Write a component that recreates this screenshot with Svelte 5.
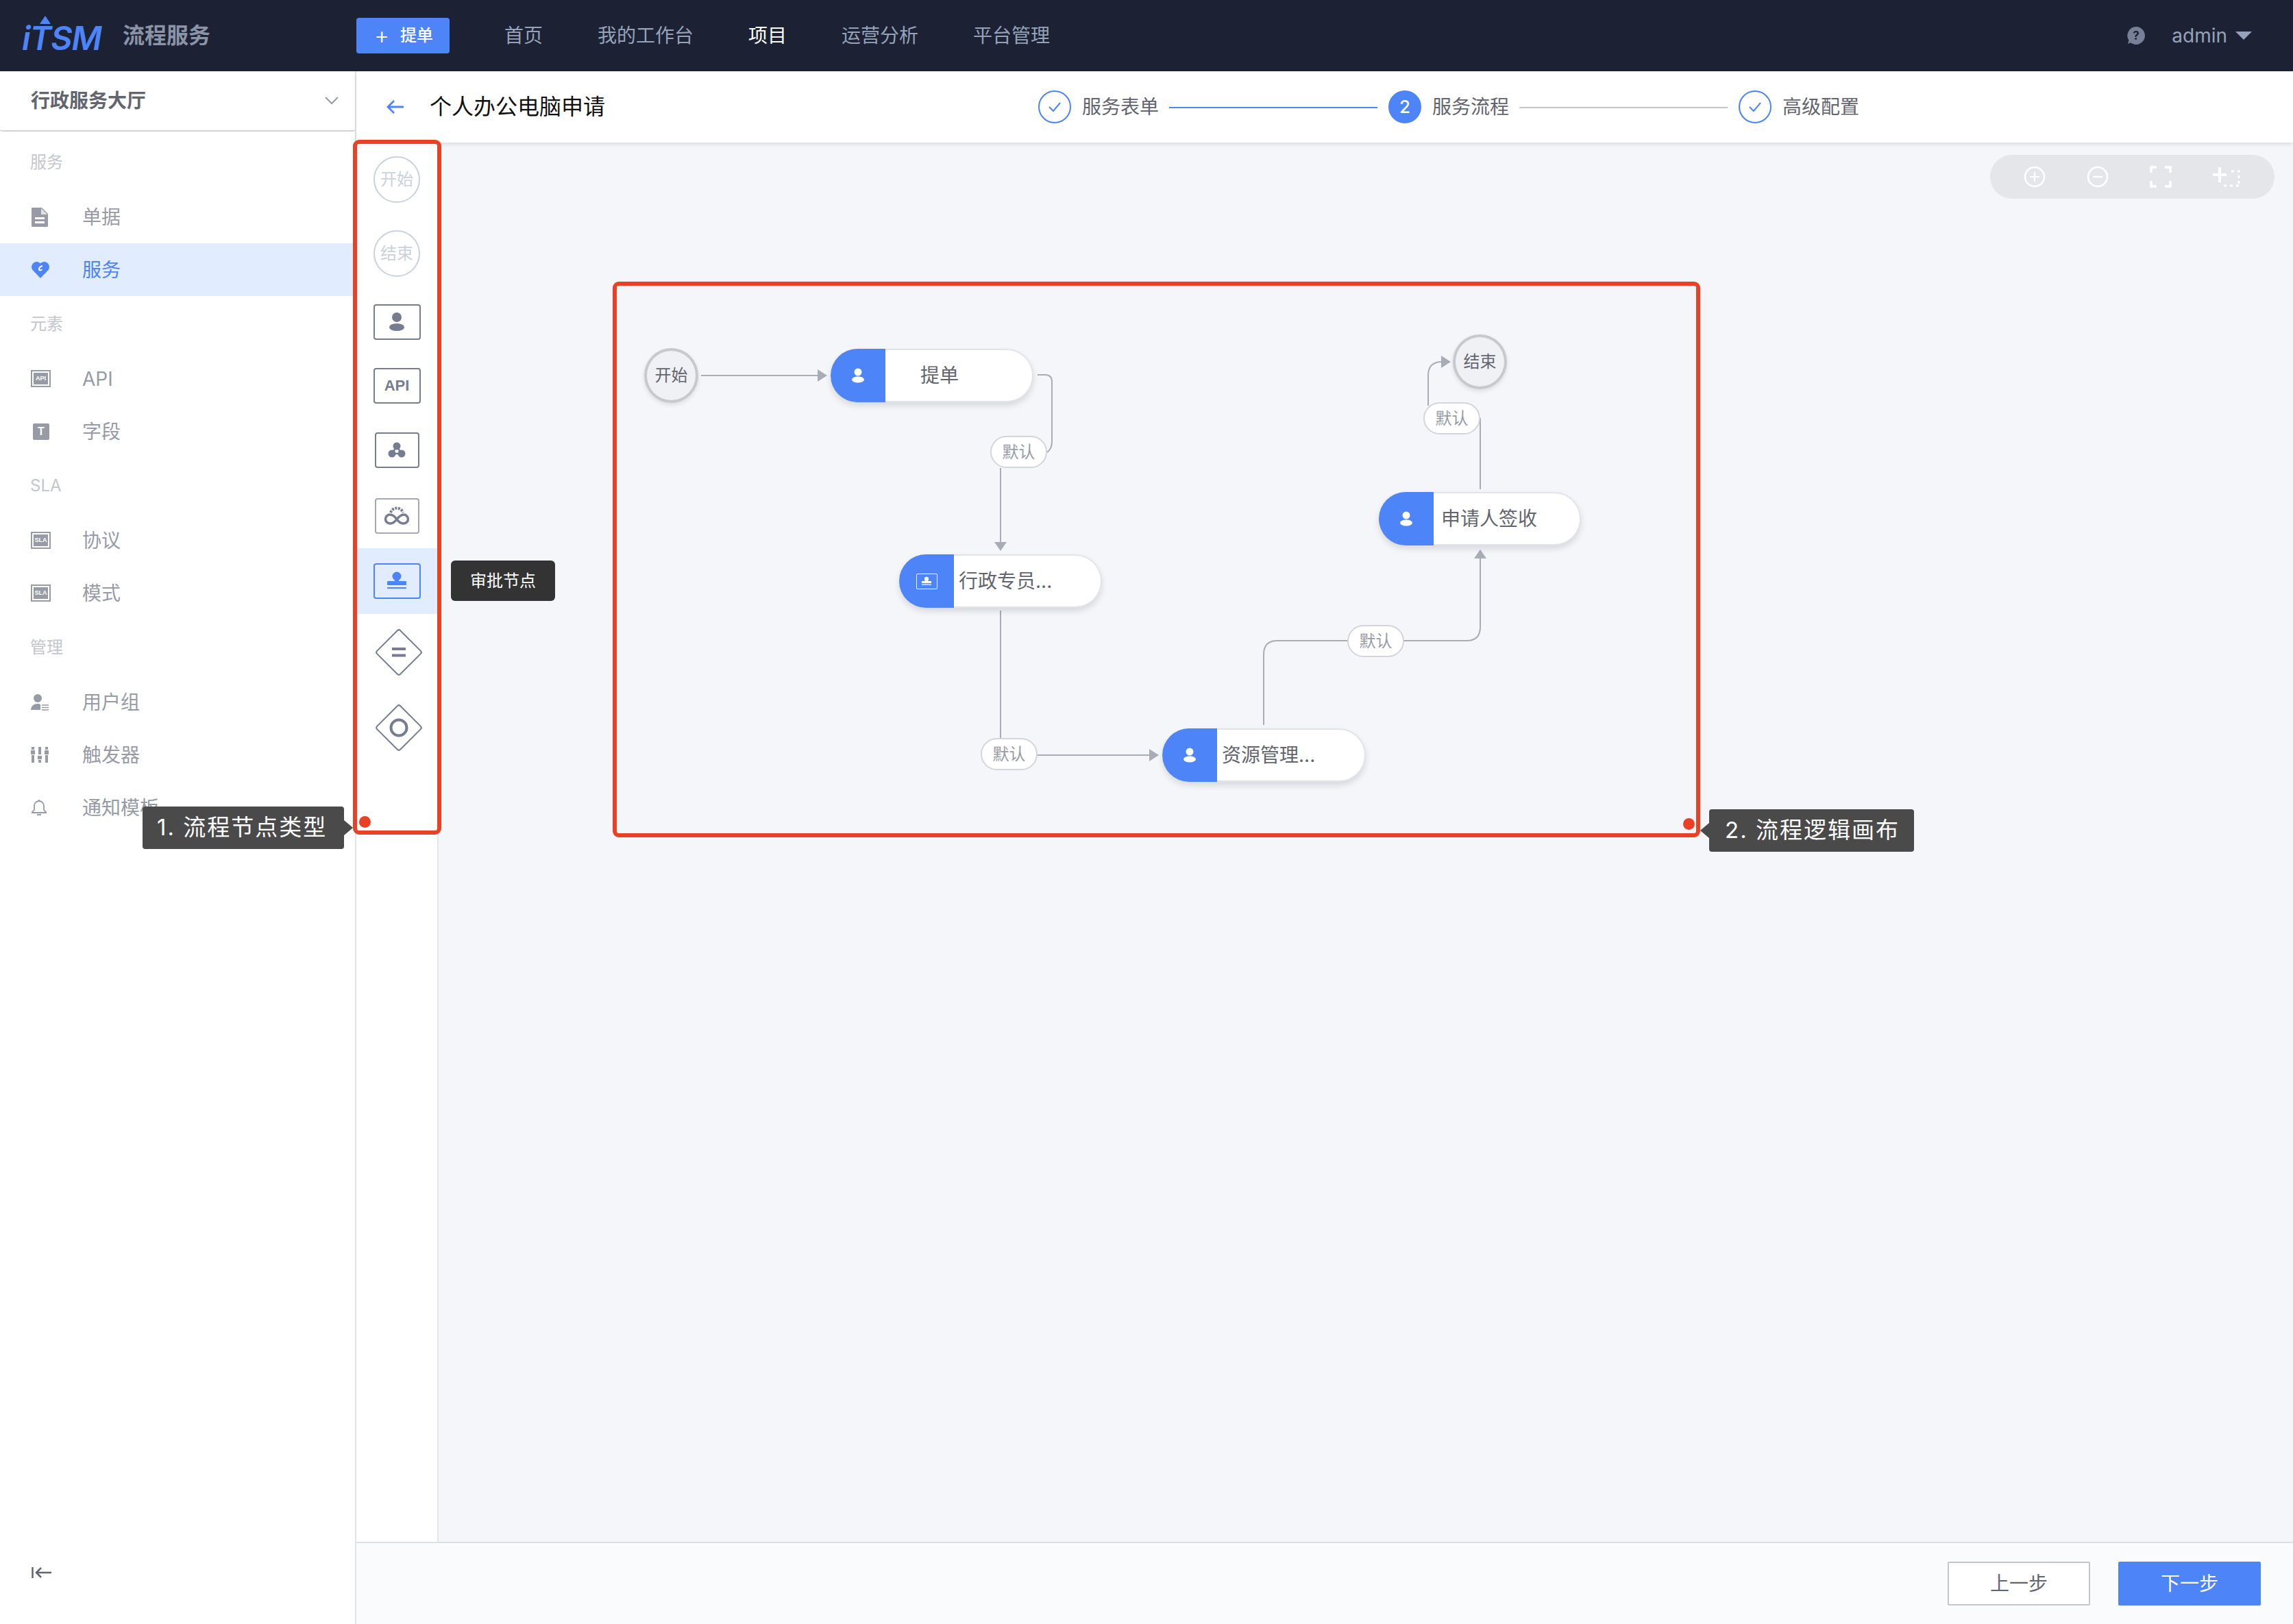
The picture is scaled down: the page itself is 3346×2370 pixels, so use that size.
<script>
  const nav = ['首页', '我的工作台', '项目', '运营分析', '平台管理'];
  const menu = [
    { label: '服务', items: [{ t: '单据', i: 'doc' }, { t: '服务', i: 'heart', active: true }] },
    { label: '元素', items: [{ t: 'API', i: 'api' }, { t: '字段', i: 'field' }] },
    { label: 'SLA', items: [{ t: '协议', i: 'sla' }, { t: '模式', i: 'sla' }] },
    { label: '管理', items: [{ t: '用户组', i: 'group' }, { t: '触发器', i: 'trigger' }, { t: '通知模板', i: 'bell' }] }
  ];
  const steps = [
    { t: '服务表单', s: 'done' },
    { t: '服务流程', s: 'cur' },
    { t: '高级配置', s: 'done' }
  ];
  const nodes = [
    { x: 1212, y: 509, w: 296, bw: 80, t: '提单', tx: 131, icon: 'user' },
    { x: 1312, y: 809, w: 296, bw: 80, t: '行政专员...', tx: 87, icon: 'stamp' },
    { x: 1696, y: 1063, w: 297, bw: 80, t: '资源管理...', tx: 87, icon: 'user' },
    { x: 2012, y: 718, w: 295, bw: 80, t: '申请人签收', tx: 91, icon: 'user' }
  ];
  const circles = [
    { x: 940, y: 508, t: '开始' },
    { x: 2120, y: 488, t: '结束' }
  ];
  const labels = [
    { x: 1445, y: 636 },
    { x: 1431, y: 1077 },
    { x: 1966, y: 912 },
    { x: 2077, y: 587 }
  ];
</script>

<div class="app">
  <header class="top">
    <div class="brand">
      <span class="logo">iTSM<svg class="logo-arrow" viewBox="0 0 16 12" width="16" height="12"><polygon points="8,0 16,12 0,12" fill="#4d84f8" /></svg></span>
      <span class="brand-name">流程服务</span>
    </div>
    <button class="create"><span class="plus">+</span>提单</button>
    <nav class="nav">
      {#each nav as n, i}
        <span class:on={i === 2}>{n}</span>
      {/each}
    </nav>
    <div class="user">
      <svg width="28" height="28" viewBox="0 0 28 28"><path d="M14 1a13 13 0 1 1-8 23.3L2 26l1.4-5A13 13 0 0 1 14 1z" fill="#768197" /><text x="14" y="20" font-size="17" font-weight="700" text-anchor="middle" fill="#1c2233" font-family="Inter">?</text></svg>
      <span class="uname">admin</span>
      <svg width="24" height="12" viewBox="0 0 24 12"><polygon points="0,0 24,0 12,12" fill="#96a2b9" /></svg>
    </div>
  </header>

  <div class="body">
    <aside class="side">
      <div class="picker">
        <span>行政服务大厅</span>
        <svg width="20" height="12" viewBox="0 0 20 12"><path d="M1 1l9 9 9-9" fill="none" stroke="#979ba5" stroke-width="2" /></svg>
      </div>
      <div class="menu">
        {#each menu as g}
          <div class="group">{g.label}</div>
          {#each g.items as it}
            <div class="item" class:active={it.active}>
              <span class="ic">
                {#if it.i === 'doc'}
                  <svg width="26" height="30" viewBox="0 0 26 30"><path d="M2 1h14l9 9v18a1 1 0 0 1-1 1H2a1 1 0 0 1-1-1V2a1 1 0 0 1 1-1z" fill="#979ba5" /><path d="M6 15h14v3H6zM6 21h14v3H6z" fill="#fff" /><path d="M15 2v9h9" fill="#fff" opacity=".7" /></svg>
                {:else if it.i === 'heart'}
                  <svg width="28" height="26" viewBox="0 0 28 26"><path d="M14 25L2.500 13A7.500 7.500 0 0 1 13 2.500L14 3.500l1-1A7.500 7.500 0 0 1 25.500 13z" fill="#4d84f8" /><path d="M17 7c-3 1-5 3-5 5 0 2 3 2 4 0" fill="none" stroke="#fff" stroke-width="2" /></svg>
                {:else if it.i === 'api' || it.i === 'sla'}
                  <span class="tag">{it.i === 'api' ? 'API' : 'SLA'}</span>
                {:else if it.i === 'field'}
                  <span class="tbox">T</span>
                {:else if it.i === 'group'}
                  <svg width="26" height="26" viewBox="0 0 26 26"><circle cx="10" cy="7" r="6" fill="#979ba5" /><path d="M0 24c0-6 5-9 10-9 2 0 3 .5 4 1v8z" fill="#979ba5" /><path d="M16 17h10M16 20.500h10M16 24h10" stroke="#979ba5" stroke-width="1.500" /></svg>
                {:else if it.i === 'trigger'}
                  <svg width="26" height="24" viewBox="0 0 26 24"><path d="M3 0v4M3 12v11M13 0v11M13 19v4M23 0v4M23 12v11" stroke="#979ba5" stroke-width="4" /><rect x="0" y="5" width="6" height="6" fill="#979ba5" /><rect x="10" y="13" width="6" height="5" fill="#979ba5" /><rect x="20" y="5" width="6" height="6" fill="#979ba5" /></svg>
                {:else}
                  <svg width="24" height="26" viewBox="0 0 24 26"><path d="M12 3a7 7 0 0 0-7 7v6l-3 3v1h20v-1l-3-3v-6a7 7 0 0 0-7-7zM12 1v2M9 23h6" fill="none" stroke="#979ba5" stroke-width="1.800" /></svg>
                {/if}
              </span>
              <span>{it.t}</span>
            </div>
          {/each}
        {/each}
      </div>
      <div class="collapse">
        <svg width="30" height="18" viewBox="0 0 30 18"><path d="M1.500 1v16M29 9H8M14 2L7 9l7 7" fill="none" stroke="#63656e" stroke-width="2.500" /></svg>
      </div>
    </aside>

    <main class="main">
      <div class="sub">
        <svg class="back" width="26" height="22" viewBox="0 0 26 22"><path d="M25 11H3M11 2l-9 9 9 9" fill="none" stroke="#4d84f8" stroke-width="2.800" /></svg>
        <span class="title">个人办公电脑申请</span>
        <div class="steps">
          {#each steps as s, i}
            <span class="dot" class:cur={s.s === 'cur'}>
              {#if s.s === 'cur'}2{:else}
                <svg width="20" height="16" viewBox="0 0 20 16"><path d="M2 8l6 6L18 2" fill="none" stroke="#4d84f8" stroke-width="2" /></svg>
              {/if}
            </span>
            <span class="stxt">{s.t}</span>
            {#if i < 2}<span class="sline" class:blue={i === 0}></span>{/if}
          {/each}
        </div>
      </div>

      <div class="work">
        <div class="palette">
          <div class="pi"><span class="pcircle">开始</span></div>
          <div class="pi"><span class="pcircle">结束</span></div>
          <div class="pi"><span class="pbox">
            <svg width="26" height="28" viewBox="0 0 26 28"><circle cx="13" cy="7" r="7" fill="#767d8e" /><ellipse cx="13" cy="21.500" rx="11" ry="5.500" fill="#767d8e" /></svg>
          </span></div>
          <div class="pi"><span class="pbox apitxt">API</span></div>
          <div class="pi"><span class="pbox narrow">
            <svg width="26" height="26" viewBox="0 0 26 26"><path d="M13 7L6 18h14z" fill="none" stroke="#767d8e" stroke-width="2.500" /><circle cx="13" cy="7" r="5.500" fill="#767d8e" /><circle cx="6" cy="18" r="5.500" fill="#767d8e" /><circle cx="20" cy="18" r="5.500" fill="#767d8e" /></svg>
          </span></div>
          <div class="pi"><span class="pbox narrow thin">
            <svg width="40" height="32" viewBox="0 0 40 32"><path d="M20 21c-4-6-7-7-10-7a6.500 6.500 0 0 0 0 13c3 0 6-1 10-6s7-7 10-7a6.500 6.500 0 0 1 0 13c-3 0-6-1-10-6z" fill="none" stroke="#767d8e" stroke-width="3.500" /><path d="M11 11a9.500 9.500 0 0 1 18 0" fill="none" stroke="#767d8e" stroke-width="4" stroke-dasharray="3 1.500" /></svg>
          </span></div>
          <div class="pi sel"><span class="pbox blue">
            <svg width="30" height="30" viewBox="0 0 30 30"><circle cx="15" cy="8" r="6.500" fill="#4d84f8" /><rect x="1" y="15" width="28" height="6" rx="1" fill="#4d84f8" /><rect x="12" y="11" width="6" height="5" fill="#4d84f8" /><rect x="1" y="24" width="28" height="2" fill="#4d84f8" /></svg>
          </span></div>
          <div class="pi">
            <svg class="dia" width="72" height="72" viewBox="0 0 72 72"><rect x="12" y="12" width="48" height="48" rx="3" transform="rotate(45 36 36)" fill="#fff" stroke="#767d8e" stroke-width="2" /><path d="M26 31h20M26 40.500h20" stroke="#767d8e" stroke-width="4" /></svg>
          </div>
          <div class="pi">
            <svg class="dia" width="72" height="72" viewBox="0 0 72 72"><rect x="12" y="12" width="48" height="48" rx="3" transform="rotate(45 36 36)" fill="#fff" stroke="#767d8e" stroke-width="2" /><circle cx="36" cy="36" r="11.500" fill="none" stroke="#767d8e" stroke-width="4" /></svg>
          </div>
        </div>

        <div class="canvas">
          <div class="tools">
            <svg width="32" height="32" viewBox="0 0 32 32"><circle cx="16" cy="16" r="14" fill="none" stroke="#fff" stroke-width="2.500" /><path d="M9 16h14M16 9v14" stroke="#fff" stroke-width="2" /></svg>
            <svg width="32" height="32" viewBox="0 0 32 32"><circle cx="16" cy="16" r="14" fill="none" stroke="#fff" stroke-width="2.500" /><path d="M9 16h14" stroke="#fff" stroke-width="2.500" /></svg>
            <svg width="32" height="32" viewBox="0 0 32 32"><path d="M10 2H2v8M22 2h8v8M10 30H2v-8M22 30h8v-8" fill="none" stroke="#fff" stroke-width="3.500" /></svg>
            <svg width="40" height="32" viewBox="0 0 40 32"><path d="M0 13h20M10 2v22" stroke="#fff" stroke-width="4" /><path d="M27 8h4M36 8h4M38 14v4M38 22v4M16 29h4M25 29h4M34 29h4" stroke="#fff" stroke-width="3" /></svg>
          </div>

          <div class="diagram">
            <svg class="edges" width="3346" height="2370" viewBox="0 0 3346 2370">
              <g fill="none" stroke="#a9acb6" stroke-width="2">
                <path d="M1023 548H1195" />
                <path d="M1514 547H1525Q1535 547 1535 557V645Q1535 655 1528 660" />
                <path d="M1460 683V793" />
                <path d="M1460 891V1077" />
                <path d="M1514 1102H1679" />
                <path d="M1844 1058V955Q1844 935 1864 935H1966" />
                <path d="M2048 935H2140Q2160 935 2160 915V815" />
                <path d="M2160 714V610" />
                <path d="M2084 592V548Q2084 528 2104 528H2105" />
              </g>
              <g fill="#a9acb6">
                <polygon points="1193,539 1207,548 1193,557" />
                <polygon points="1451,791 1469,791 1460,804" />
                <polygon points="1677,1093 1691,1102 1677,1111" />
                <polygon points="2151,815 2169,815 2160,802" />
                <polygon points="2103,519 2117,528 2103,537" />
              </g>
            </svg>

            {#each circles as c}
              <div class="cnode" style="left:{c.x}px;top:{c.y}px">{c.t}</div>
            {/each}

            {#each nodes as n}
              <div class="node" style="left:{n.x}px;top:{n.y}px;width:{n.w}px">
                <span class="nicon" style="width:{n.bw}px">
                  {#if n.icon === 'user'}
                    <svg width="20" height="22" viewBox="0 0 20 22"><circle cx="10" cy="6" r="5.500" fill="#fff" /><ellipse cx="10" cy="17" rx="9" ry="4.500" fill="#fff" /></svg>
                  {:else}
                    <span class="mini">
                      <svg width="18" height="14" viewBox="0 0 18 14"><circle cx="9" cy="4" r="3.200" fill="#fff" /><rect x="2" y="7" width="14" height="3" fill="#fff" /><rect x="2" y="11.500" width="14" height="1.200" fill="#fff" /></svg>
                    </span>
                  {/if}
                </span>
                <span class="ntext" style="left:{n.tx}px">{n.t}</span>
              </div>
            {/each}

            {#each labels as l}
              <div class="elabel" style="left:{l.x}px;top:{l.y}px">默认</div>
            {/each}
          </div>
        </div>
      </div>

      <footer class="foot">
        <button class="fbtn">上一步</button>
        <button class="fbtn primary">下一步</button>
      </footer>
    </main>
  </div>

  <div class="hint">审批节点</div>

  <div class="frame f1"></div>
  <div class="frame f2"></div>
  <span class="rdot d1"></span>
  <span class="rdot d2"></span>
  <div class="callout c1">1. 流程节点类型</div>
  <div class="callout c2">2. 流程逻辑画布</div>
</div>

<style>
  :global(body) { margin: 0; background: #fff; }
  .app {
    position: relative;
    width: 3346px;
    height: 2370px;
    overflow: hidden;
    display: flex;
    flex-direction: column;
    font-family: Inter, "Noto Sans CJK SC", sans-serif;
    color: #63656e;
    font-size: 28px;
    line-height: 40px;
  }
  .top {
    height: 104px;
    flex: none;
    background: #1c2233;
    display: flex;
    align-items: center;
    box-sizing: border-box;
    padding-left: 32px;
    padding-right: 60px;
  }
  .brand { display: flex; align-items: center; width: 488px; }
  .logo {
    position: relative;
    width: 147px;
    font-size: 48px;
    line-height: 48px;
    font-weight: 600;
    font-style: italic;
    color: #4d84f8;
    letter-spacing: -1px;
    margin-top: 8px;
  }
  .logo-arrow { position: absolute; left: 26px; top: -9px; }
  .brand-name { font-size: 32px; font-weight: 700; color: #8b93a7; }
  .create {
    width: 136px;
    height: 52px;
    border: 0;
    border-radius: 4px;
    background: #4d84f8;
    color: #fff;
    font: 500 24px/52px Inter, "Noto Sans CJK SC", sans-serif;
    padding: 0 0 0 2px;
    display: flex;
    align-items: center;
    justify-content: center;
  }
  .plus { font-size: 34px; font-weight: 300; margin-right: 16px; }
  .nav { display: flex; gap: 80px; margin-left: 80px; color: #96a2b9; }
  .nav .on { color: #fff; }
  .user { margin-left: auto; display: flex; align-items: center; color: #96a2b9; }
  .uname { margin: 0 12px 0 38px; }

  .body { flex: 1; display: flex; min-height: 0; }
  .side {
    width: 520px;
    flex: none;
    box-sizing: border-box;
    border-right: 2px solid #e3e4e9;
    display: flex;
    flex-direction: column;
    background: #fff;
  }
  .picker {
    height: 88px;
    flex: none;
    box-sizing: border-box;
    border-bottom: 2px solid #d3d0d8;
    border-radius: 0 0 4px 4px;
    display: flex;
    align-items: center;
    justify-content: space-between;
    padding: 0 24px 0 45px;
    font-weight: 700;
  }
  .menu { padding-top: 4px; flex: 1; }
  .group {
    height: 82px;
    line-height: 82px;
    padding-left: 44px;
    font-size: 24px;
    color: #c4c6cc;
  }
  .item {
    height: 77px;
    display: flex;
    align-items: center;
    color: #979ba5;
    margin-right: -2px;
  }
  .item.active { background: #e1ecff; color: #4d84f8; }
  .ic { width: 120px; padding-left: 45px; box-sizing: border-box; display: flex; align-items: center; flex: none; }
  .tag {
    width: 29px;
    height: 25px;
    box-sizing: border-box;
    border: 2px solid #979ba5;
    font: 700 9px/21px "Liberation Sans", sans-serif;
    text-align: center;
    color: #979ba5;
    outline: 1px solid #fff;
    outline-offset: -4px;
    box-shadow: inset 0 0 0 2px #fff, inset 0 0 0 30px #979ba5;
    color: #fff;
  }
  .tbox {
    width: 24px;
    height: 24px;
    margin-left: 3px;
    background: #979ba5;
    color: #fff;
    border-radius: 2px;
    font: 700 16px/24px "Liberation Sans", sans-serif;
    text-align: center;
  }
  .collapse { height: 96px; padding-left: 46px; flex: none; }

  .main { flex: 1; display: flex; flex-direction: column; min-width: 0; }
  .sub {
    height: 104px;
    flex: none;
    background: #fff;
    display: flex;
    align-items: center;
    padding-left: 44px;
    box-shadow: 0 2px 6px rgba(0, 0, 0, .12);
    position: relative;
    z-index: 2;
  }
  .back { flex: none; }
  .title { font-size: 32px; color: #111; margin-left: 37px; width: 256px; white-space: nowrap; }
  .steps { display: flex; align-items: center; margin-left: 632px; }
  .dot {
    width: 48px;
    height: 48px;
    box-sizing: border-box;
    border: 2px solid #4d84f8;
    border-radius: 50%;
    display: flex;
    align-items: center;
    justify-content: center;
    flex: none;
  }
  .dot.cur { background: #4d84f8; color: #fff; font-size: 26px; font-weight: 500; }
  .stxt { margin-left: 16px; width: 113px; white-space: nowrap; }
  .sline { width: 304px; height: 2px; margin: 2px 16px 0 14px; background: #c4c6cc; }
  .sline.blue { background: #4d84f8; }

  .work { flex: 1; display: flex; min-height: 0; }
  .palette {
    width: 120px;
    flex: none;
    box-sizing: border-box;
    background: #fff;
    border-right: 2px solid #e6e7ec;
  }
  .pi { display: flex; align-items: center; justify-content: center; height: 95px; }
  .pi:nth-child(1), .pi:nth-child(2) { height: 108px; }
  .pi:nth-child(3) { height: 92px; }
  .pi:nth-child(4) { height: 93px; }
  .pi:nth-child(5) { height: 96px; }
  .pi:nth-child(7) { height: 96px; }
  .pi:nth-child(8) { height: 112px; }
  .pi:nth-child(9) { height: 108px; }
  .pi.sel { background: #e1ecff; }
  .pcircle {
    width: 68px;
    height: 68px;
    box-sizing: border-box;
    border: 2px solid #c9d1dd;
    border-radius: 50%;
    font-size: 24px;
    line-height: 64px;
    text-align: center;
    color: #c9d1dd;
  }
  .pbox {
    width: 69px;
    height: 52px;
    box-sizing: border-box;
    border: 2px solid #767d8e;
    border-radius: 4px;
    display: flex;
    align-items: center;
    justify-content: center;
    background: #fff;
  }
  .pbox.narrow { width: 65px; }
  .pbox.thin { border-color: #a5a8b3; }
  .pbox.blue { border-color: #4d84f8; background: #e1ecff; }
  .apitxt { font: 700 22px/1 "Liberation Sans", sans-serif; color: #767d8e; }
  .dia { margin-left: 6px; }

  .canvas { flex: 1; position: relative; background: #f5f6fa; min-width: 0; }
  .tools {
    position: absolute;
    right: 27px;
    top: 18px;
    width: 415px;
    height: 64px;
    box-sizing: border-box;
    border-radius: 32px;
    background: #e5e6ea;
    display: flex;
    align-items: center;
    padding-left: 49px;
    gap: 60px;
  }
  .diagram { position: absolute; left: -640px; top: -208px; width: 3346px; height: 2370px; pointer-events: none; }
  .edges { position: absolute; left: 0; top: 0; }
  .cnode {
    position: absolute;
    width: 79px;
    height: 80px;
    box-sizing: border-box;
    border: 4px solid #c8c9cc;
    border-radius: 50%;
    background: #f0f1f5;
    box-shadow: 0 3px 6px rgba(0, 0, 0, .1);
    font-size: 24px;
    line-height: 72px;
    text-align: center;
  }
  .node {
    position: absolute;
    height: 78px;
    box-sizing: border-box;
    border: 2px solid #e3e4ea;
    border-left: 0;
    border-radius: 39px;
    background: #fff;
    box-shadow: 0 5px 10px rgba(0, 0, 0, .12);
  }
  .nicon {
    position: absolute;
    left: 0;
    top: -2px;
    bottom: -2px;
    background: #4d84f8;
    border-radius: 39px 0 0 39px;
    display: flex;
    align-items: center;
    justify-content: center;
  }
  .mini {
    width: 31px;
    height: 23px;
    box-sizing: border-box;
    border: 1px solid #fff;
    border-radius: 2px;
    display: flex;
    align-items: center;
    justify-content: center;
  }
  .ntext { position: absolute; top: 17px; white-space: nowrap; }
  .elabel {
    position: absolute;
    width: 83px;
    height: 47px;
    box-sizing: border-box;
    border: 2px solid #d3d5da;
    border-radius: 24px;
    background: #fff;
    font-size: 24px;
    line-height: 43px;
    text-align: center;
    color: #979ba5;
  }

  .foot {
    height: 120px;
    flex: none;
    box-sizing: border-box;
    border-top: 2px solid #dcdee5;
    background: #fafbfd;
    display: flex;
    align-items: center;
    justify-content: flex-end;
    gap: 41px;
    padding-right: 47px;
    padding-top: 0;
    position: relative;
    z-index: 2;
  }
  .fbtn {
    width: 208px;
    height: 64px;
    box-sizing: border-box;
    border: 2px solid #c4c6cc;
    border-radius: 2px;
    background: #fff;
    color: #63656e;
    font: 28px/60px Inter, "Noto Sans CJK SC", sans-serif;
    padding: 0;
  }
  .fbtn.primary { background: #4d84f8; border-color: #4d84f8; color: #fff; }

  .hint {
    position: absolute;
    left: 658px;
    top: 818px;
    width: 152px;
    height: 59px;
    border-radius: 6px;
    background: #333;
    color: #fff;
    font-size: 24px;
    line-height: 59px;
    text-align: center;
    z-index: 3;
  }
  .frame {
    position: absolute;
    box-sizing: border-box;
    border: 6px solid #ea4126;
    border-radius: 9px;
    z-index: 4;
  }
  .f1 { left: 515px; top: 204px; width: 129px; height: 1014px; }
  .f2 { left: 894px; top: 411px; width: 1587px; height: 811px; }
  .rdot { position: absolute; width: 17px; height: 17px; border-radius: 50%; background: #ea4126; z-index: 4; }
  .d1 { left: 524px; top: 1191px; }
  .d2 { left: 2456px; top: 1194px; }
  .callout {
    position: absolute;
    height: 62px;
    box-sizing: border-box;
    background: #4a4a4a;
    border-radius: 4px;
    color: #fff;
    font-size: 33px;
    line-height: 60px;
    letter-spacing: 2px;
    white-space: nowrap;
    z-index: 5;
  }
  .callout::after {
    content: "";
    position: absolute;
    top: 50%;
    margin-top: -11px;
    border: 11px solid transparent;
  }
  .c1 { left: 208px; top: 1177px; width: 294px; padding-left: 21px; }
  .c1::after { left: 100%; border-left: 13px solid #4a4a4a; border-right: 0; }
  .c2 { left: 2494px; top: 1181px; width: 299px; padding-left: 23px; }
  .c2::after { right: 100%; border-right: 13px solid #4a4a4a; border-left: 0; margin-top: -11px; }
</style>
